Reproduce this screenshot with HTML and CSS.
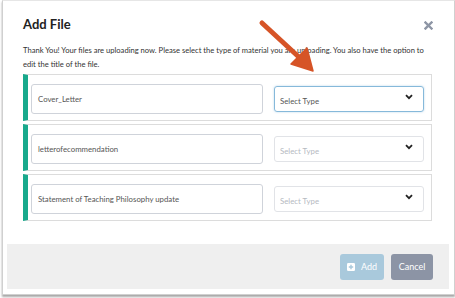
FILE: index.html
```html
<!DOCTYPE html>
<html>
<head>
<meta charset="utf-8">
<link rel="stylesheet" href="styles.css">
</head>
<body>
<div class="modal">
  <div class="modal-body">
    <div class="header">
      <h1 class="title">Add File</h1>
      <svg class="close" width="9" height="9" viewBox="0 0 9 9"><path d="M1.5 1.5 L7.5 7.5 M7.5 1.5 L1.5 7.5" stroke="#8d95a5" stroke-width="2.4" stroke-linecap="square"/></svg>
    </div>
    <p class="intro">Thank You! Your files are uploading now. Please select the type of material you are uploading. You also have the option to edit the title of the file.</p>
    <div class="rows">
      <div class="row">
        <div class="input">Cover_Letter</div>
        <div class="select focused"><span>Select Type</span><svg class="chev" width="8" height="6" viewBox="0 0 8 6"><path d="M1 1.2 L4 4.2 L7 1.2" fill="none" stroke="#222" stroke-width="1.8"/></svg></div>
      </div>
      <div class="row">
        <div class="input">letterofecommendation</div>
        <div class="select"><span>Select Type</span><svg class="chev" width="8" height="6" viewBox="0 0 8 6"><path d="M1 1.2 L4 4.2 L7 1.2" fill="none" stroke="#222" stroke-width="1.8"/></svg></div>
      </div>
      <div class="row">
        <div class="input">Statement of Teaching Philosophy update</div>
        <div class="select"><span>Select Type</span><svg class="chev" width="8" height="6" viewBox="0 0 8 6"><path d="M1 1.2 L4 4.2 L7 1.2" fill="none" stroke="#222" stroke-width="1.8"/></svg></div>
      </div>
    </div>
  </div>
  <div class="footer">
    <button class="btn add"><svg width="8" height="8" viewBox="0 0 8 8"><rect x="0" y="0" width="8" height="8" rx="1.2" fill="#fff"/><path d="M4 1.8 V6.2 M1.8 4 H6.2" stroke="#a9c9dc" stroke-width="1.4"/></svg>Add</button>
    <button class="btn cancel">Cancel</button>
  </div>
</div>
<svg class="arrow" width="455" height="298" viewBox="0 0 455 298">
  <path d="M262 23 L301 59" stroke="#d65427" stroke-width="5" stroke-linecap="round"/>
  <path d="M313 71 L291 64 L307 48 Z" fill="#d65427" stroke="#d65427" stroke-width="1.5" stroke-linejoin="round"/>
</svg>
</body>
</html>
```
FILE: styles.css
```css
html, body {
  margin: 0;
  padding: 0;
  background: #fff;
  font-family: Lato, "Open Sans", sans-serif;
}
body {
  position: relative;
  width: 455px;
  height: 298px;
  overflow: hidden;
}
.modal {
  box-sizing: border-box;
  margin-left: 2px;
  width: 453px;
  height: 295px;
  border: 1px solid #d0d0d0;
  border-top-color: #e6e6e6;
  box-shadow: 0 2px 2px rgba(0,0,0,0.35);
  padding: 0 5px 5px 4px;
  display: flex;
  flex-direction: column;
  background: #fff;
}
.modal-body {
  flex: 1;
  padding: 0 15px 0 16px;
}
.header {
  display: flex;
  justify-content: space-between;
  align-items: center;
  padding-top: 14px;
  height: 18px;
}
.title {
  margin: 0;
  font-size: 13px;
  font-weight: 700;
  color: #222;
  line-height: 18px;
}
.close {
  margin-right: 1px;
  margin-top: 2px;
}
.intro {
  margin: 10px 0 0;
  font-size: 7.6px;
  line-height: 14px;
  color: #333;
  width: 410px;
}
.rows {
  margin-top: 3px;
  display: flex;
  flex-direction: column;
  gap: 3px;
  width: 409px;
}
.row {
  box-sizing: border-box;
  height: 47px;
  border: 1px solid #dcdcdc;
  border-left: 5px solid #18a98c;
  padding: 9px 7px 0 3px;
  display: flex;
  align-items: flex-start;
  gap: 11px;
}
.input {
  box-sizing: border-box;
  width: 232px;
  height: 30px;
  border: 1px solid #cfd3da;
  border-radius: 3px;
  padding-left: 6px;
  font-size: 7.8px;
  color: #555;
  display: flex;
  align-items: center;
}
.select {
  box-sizing: border-box;
  margin-top: 2px;
  width: 150px;
  height: 26px;
  border: 1px solid #e1e3e7;
  border-radius: 3px;
  padding: 0 10px 0 5px;
  font-size: 7.8px;
  color: #b5b9bf;
  display: flex;
  align-items: center;
  justify-content: space-between;
}
.select span {
  margin-top: 3px;
}
.select.focused {
  border-color: #86b9da;
  box-shadow: 0 0 2px rgba(102,170,215,0.5);
  color: #555;
}
.chev {
  margin-top: -4px;
}
.footer {
  height: 45px;
  background: #efefef;
  display: flex;
  justify-content: flex-end;
  align-items: center;
  gap: 7px;
  padding-right: 16px;
}
.btn {
  height: 26px;
  border: none;
  border-radius: 3px;
  color: #fff;
  font-family: Lato, "Open Sans", sans-serif;
  font-size: 9px;
  padding: 0;
  display: flex;
  align-items: center;
  justify-content: center;
  gap: 6px;
}
.btn.add {
  width: 44px;
  background: #a9c9dc;
}
.btn.cancel {
  width: 42px;
  background: #8c94a5;
}
.arrow {
  position: absolute;
  left: 0;
  top: 0;
  pointer-events: none;
}
```
